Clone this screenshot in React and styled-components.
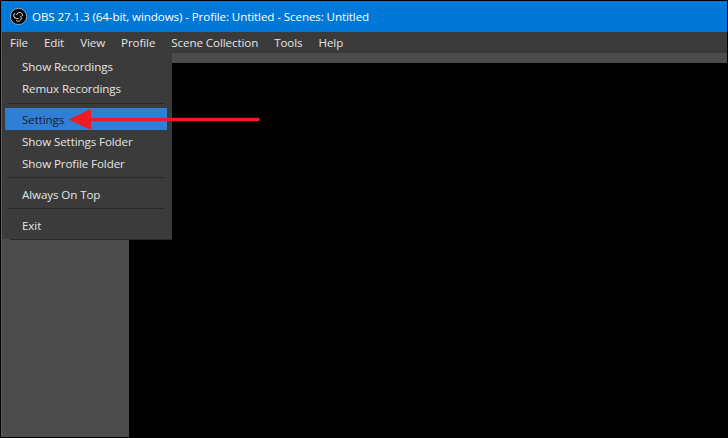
import React from "react";
import styled, { createGlobalStyle } from "styled-components";

const Global = createGlobalStyle`
  html, body { margin: 0; padding: 0; background: #000; }
  body { width: 728px; height: 438px; overflow: hidden; }
`;

const font = `"Open Sans", "Noto Sans", "Liberation Sans", sans-serif`;

const Screen = styled.div`
  position: relative;
  box-sizing: border-box;
  width: 728px;
  height: 438px;
  padding: 1px;
  background: #000;
  font-family: ${font};
  font-size: 11.6px;
  letter-spacing: -0.1px;
  overflow: hidden;
`;
const Win = styled.div`
  box-sizing: border-box;
  width: 100%;
  height: 100%;
  border-left: 1px solid #0078d7;
  display: flex;
  flex-direction: column;
  background: #000;
`;
const TitleBar = styled.div`
  flex: 0 0 31px;
  background: #0078d7;
  color: #fff;
  display: flex;
  align-items: center;
  gap: 5px;
  padding-left: 8px;
`;
const MenuBar = styled.div`
  flex: 0 0 21px;
  background: #3a3a3a;
  display: flex;
  align-items: center;
  padding-left: 8px;
  gap: 16px;
  color: #e4e4e4;
`;
const Strip = styled.div`
  flex: 0 0 10px;
  background: #4c4c4c;
`;
const Body = styled.div`
  flex: 1;
  display: flex;
`;
const Side = styled.div`
  width: 127px;
  background: #4c4c4c;
`;
const Preview = styled.div`
  flex: 1;
  background: #000;
`;
const Menu = styled.div`
  position: absolute;
  left: 2px;
  top: 53px;
  width: 170px;
  height: 186px;
  box-sizing: border-box;
  padding: 2px 5px 0 3px;
  background: #3b3b3b;
  color: #e4e4e4;
  display: flex;
  flex-direction: column;
  &::after {
    content: "";
    position: absolute;
    left: 8px;
    right: 0;
    bottom: -1px;
    height: 1px;
    background: #2a2a2a;
  }
`;
const Item = styled.div`
  height: 22px;
  flex: 0 0 auto;
  display: flex;
  align-items: center;
  padding-left: 17px;
  background: ${p => (p.$active ? "#2f7fd6" : "transparent")};
  color: ${p => (p.$active ? "#1e1e1e" : "#e4e4e4")};
`;
const Sep = styled.div`
  height: 1px;
  flex: 0 0 auto;
  margin: ${p => (p.$first ? "4px 2px 4px" : "3px 2px 5px")};
  background: #2a2a2e;
`;
const Arrow = styled.svg`
  position: absolute;
  left: 60px;
  top: 100px;
`;

const Logo = () => (
  <svg width="17" height="17" viewBox="0 0 17 17">
    <circle cx="8.5" cy="8.5" r="8.1" fill="#050505" stroke="#e0e0e0" strokeWidth="0.6" />
    <g fill="none" stroke="#f0f0f0" strokeWidth="1" strokeLinecap="round">
      <path d="M6.8 6.6 C7.4 4.2 10.6 3.6 12 5.6 C12.5 6.4 12.6 7 12.4 7.6" />
      <path d="M8.2 10.6 C5.8 11.2 3.6 9.6 3.8 7.2 C3.9 6.3 4.3 5.8 4.8 5.4" />
      <path d="M10.4 8 C12.2 9.8 11.2 12.6 8.6 13.2 C7.7 13.4 7 13.1 6.5 12.7" />
    </g>
  </svg>
);

export default function App() {
  return (
    <Screen>
      <Global />
      <Win>
        <TitleBar>
          <Logo />
          <span>OBS 27.1.3 (64-bit, windows) - Profile: Untitled - Scenes: Untitled</span>
        </TitleBar>
        <MenuBar>
          {["File", "Edit", "View", "Profile", "Scene Collection", "Tools", "Help"].map(m => (
            <span key={m}>{m}</span>
          ))}
        </MenuBar>
        <Strip />
        <Body>
          <Side />
          <Preview />
        </Body>
      </Win>
      <Menu>
        <Item>Show Recordings</Item>
        <Item>Remux Recordings</Item>
        <Sep $first />
        <Item $active>Settings</Item>
        <Item>Show Settings Folder</Item>
        <Item>Show Profile Folder</Item>
        <Sep />
        <Item>Always On Top</Item>
        <Sep />
        <Item>Exit</Item>
      </Menu>
      <Arrow width="204" height="40" viewBox="0 0 204 40">
        <path d="M198 19.5 H28" stroke="#ed1c24" strokeWidth="3.5" strokeLinecap="round" />
        <path d="M8.5 19.5 L31 9 V30 Z" fill="#ed1c24" />
      </Arrow>
    </Screen>
  );
}
